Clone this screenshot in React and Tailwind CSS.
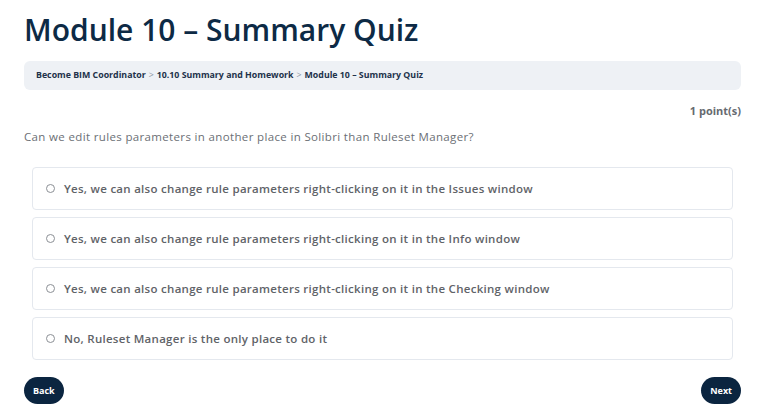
import { useState } from 'react';

const options = [
  'Yes, we can also change rule parameters right-clicking on it in the Issues window',
  'Yes, we can also change rule parameters right-clicking on it in the Info window',
  'Yes, we can also change rule parameters right-clicking on it in the Checking window',
  'No, Ruleset Manager is the only place to do it',
];

export default function App() {
  const [picked, setPicked] = useState(null);

  return (
    <div className="w-[768px] h-[420px] bg-white pl-6 pr-[27px] pt-[11px] font-['Open_Sans',sans-serif] overflow-hidden">
      <h1 className="text-[30px] leading-[38px] font-semibold text-[#0d2a45]">
        Module 10 – Summary Quiz
      </h1>

      {/* Breadcrumb */}
      <div className="mt-[12px] h-[29px] rounded-md bg-[#eef1f5] px-3 flex items-center text-[8.8px] font-bold text-[#22324a]">
        <span>Become BIM Coordinator</span>
        <span className="mx-[3px] text-[#8a94a3] font-normal">&gt;</span>
        <span>10.10 Summary and Homework</span>
        <span className="mx-[3px] text-[#8a94a3] font-normal">&gt;</span>
        <span>Module 10 – Summary Quiz</span>
      </div>

      <div className="mt-[13px] text-right text-[11px] font-bold text-[#666a70]">1 point(s)</div>

      <p className="mt-[8px] text-[11.5px] tracking-[0.35px] text-[#6b6f75]">
        Can we edit rules parameters in another place in Solibri than Ruleset Manager?
      </p>

      <div className="mt-[22px] mx-2 flex flex-col gap-[7px]">
        {options.map((o, i) => (
          <label
            key={i}
            className="h-[43px] rounded-[4px] border border-[#e4e8ee] flex items-center pl-[13px] gap-[9px] cursor-pointer"
          >
            <input
              type="radio"
              name="q"
              checked={picked === i}
              onChange={() => setPicked(i)}
              className="appearance-none w-[9px] h-[9px] rounded-full border border-[#8b8f95] checked:bg-[#0d2a45] m-0"
            />
            <span className="text-[11.5px] tracking-[0.28px] font-semibold text-[#5f6368]">{o}</span>
          </label>
        ))}
      </div>

      <div className="mt-[17px] flex justify-between">
        <button className="h-[27px] px-[9px] rounded-full bg-[#0b2540] text-white text-[9px] font-bold">Back</button>
        <button className="h-[27px] px-[9px] rounded-full bg-[#0b2540] text-white text-[9px] font-bold">Next</button>
      </div>
    </div>
  );
}
